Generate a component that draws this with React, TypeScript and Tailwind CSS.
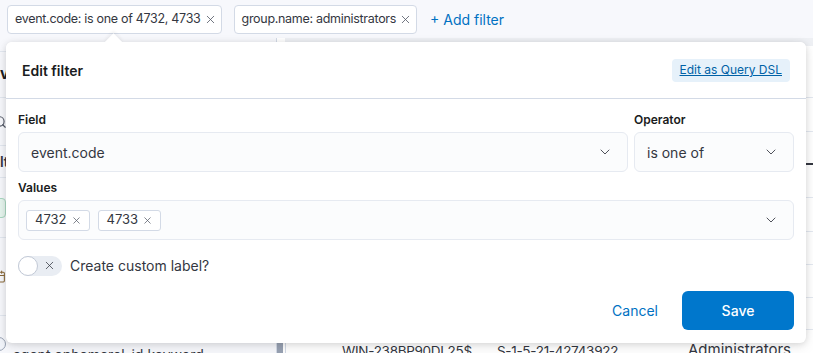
import { ChevronDown, X, Search, Calendar } from 'lucide-react';

function Pill({ label }: { label: string }) {
  return (
    <div className="flex h-[29px] items-center gap-[3px] rounded-[4px] border border-[#d3dae6] bg-white pl-[7px] pr-[4px] text-[12.5px] tracking-[-0.3px] text-[#343741]">
      <span>{label}</span>
      <X className="h-[13px] w-[13px] text-[#535966]" strokeWidth={1.5} />
    </div>
  );
}

function Chip({ label }: { label: string }) {
  return (
    <div className="flex h-[21px] items-center gap-[4px] rounded-[3px] border border-[#d3dae6] bg-white pl-[8px] pr-[7px] text-[13px] text-[#343741]">
      <span>{label}</span>
      <X className="h-[11px] w-[11px] text-[#535966]" strokeWidth={1.6} />
    </div>
  );
}

function Select({ value, className }: { value: string; className: string }) {
  return (
    <div
      className={`flex h-[40px] items-center justify-between rounded-[6px] border border-[#e6eaf1] bg-[#fbfcfd] pl-[12px] pr-[14px] text-[14px] text-[#343741] ${className}`}
    >
      <span>{value}</span>
      <ChevronDown className="h-[16px] w-[16px] text-[#343741]" strokeWidth={1.3} />
    </div>
  );
}

export default function App() {
  return (
    <div className="relative h-[353px] w-[813px] overflow-hidden bg-white font-['Inter',sans-serif] text-[#343741]">
      {/* filter bar */}
      <div className="flex h-[38px] items-center gap-[12px] bg-[#f7f8fc] pl-[7px]">
        <Pill label="event.code: is one of 4732, 4733" />
        <Pill label="group.name: administrators" />
        <span className="ml-[1px] text-[14px] text-[#0071c2]">+ Add filter</span>
      </div>

      {/* page behind */}
      <div className="flex h-[315px]">
        <div className="flex w-[277px] flex-col border-r border-[#d3dae6] bg-[#f7f8fc]">
          <div className="h-[14px] border-b border-[#e3e8f0]" />
          <div className="flex h-[46px] items-center border-b border-[#e3e8f0]">
            <span className="w-[7px] overflow-hidden whitespace-nowrap text-[15px] font-bold text-[#1a1c21]">vi</span>
          </div>
          <div className="flex h-[48px] items-center border-b border-[#e3e8f0]">
            <Search className="ml-[-7px] h-[14px] w-[14px] text-[#535966]" />
          </div>
          <div className="flex h-[32px] items-center border-b border-[#e3e8f0]">
            <span className="w-[6px] overflow-hidden whitespace-nowrap text-[14px] font-semibold">lt</span>
          </div>
          <div className="flex h-[60px] items-center border-b border-[#e3e8f0]">
            <span className="ml-[-8px] h-[20px] w-[14px] rounded-[4px] border border-[#a8d8c0] bg-[#e6f5ee]" />
          </div>
          <div className="flex h-[78px] items-center border-b border-[#e3e8f0]">
            <Calendar className="ml-[-7px] h-[13px] w-[13px] text-[#8a6a3a]" />
          </div>
          <div className="flex flex-1 items-end gap-[7px] text-[14px] text-[#343741]">
            <span className="ml-[-8px] mb-[2px] h-[14px] w-[14px] shrink-0 rounded-full border border-[#98a2b3] bg-[#f1f4fa]" />
            <span className="-mb-[10px] leading-[16px]">agent.ephemeral_id.keyword</span>
          </div>
        </div>
        <div className="flex w-[8px] flex-col">
          <div className="flex-1" />
          <div className="h-[26px] w-[6px] bg-[#98a2b3]" />
        </div>
        <div className="flex flex-1 flex-col bg-white">
          <div className="h-[8px] bg-[#eef0f4]" />
          <div className="h-[52px] border-b border-[#e3e8f0]" />
          <div className="h-[34px] border-b border-[#e3e8f0]" />
          <div className="h-[33px] border-b-2 border-[#343741]" />
          <div className="h-[33px] border-b border-[#e3e8f0]" />
          <div className="h-[34px] border-b border-[#e3e8f0]" />
          <div className="h-[33px] border-b border-[#e3e8f0]" />
          <div className="h-[33px] border-b border-[#e3e8f0]" />
          <div className="h-[32px] border-b border-[#e3e8f0]" />
          <div className="flex flex-1 items-end border-l border-[#d3dae6] pl-[56px] text-[15px] text-[#343741]">
            <span className="-mb-[8px] w-[155px] shrink-0 text-[13.5px] tracking-[-0.3px]">WIN-238BP90DL25$</span>
            <span className="-mb-[8px] w-[191px] shrink-0 text-[13.5px] tracking-[-0.3px]">S-1-5-21-42743922</span>
            <span className="-mb-[8px] shrink-0">Administrators</span>
          </div>
        </div>
      </div>

      {/* popover */}
      <div className="absolute left-[6px] top-[42px] w-[800px] rounded-[6px] bg-white shadow-[0_1px_6px_rgba(0,0,0,0.12),0_4px_14px_rgba(0,0,0,0.08)]">
        <div className="absolute left-[101px] top-[-6px] h-[13px] w-[13px] rotate-45 bg-white shadow-[-2px_-2px_3px_rgba(0,0,0,0.05)]" />
        <div className="relative flex h-[57px] items-center justify-between rounded-t-[6px] border-b border-[#d3dae6] bg-white pl-[16px] pr-[16px]">
          <span className="text-[14px] font-semibold text-[#1a1c21]">Edit filter</span>
          <span className="flex h-[23px] items-center rounded-[4px] bg-[#e6f1fa] px-[8px] text-[12px] text-[#0061a6] underline">
            Edit as Query DSL
          </span>
        </div>
        <div className="px-[12px] pb-[13px] pt-[13px]">
          <div className="flex gap-[6px]">
            <div className="flex flex-col">
              <span className="mb-[5px] text-[12px] font-semibold leading-[15px] text-[#1a1c21]">Field</span>
              <Select value="event.code" className="w-[610px]" />
            </div>
            <div className="flex flex-col">
              <span className="mb-[5px] text-[12px] font-semibold leading-[15px] text-[#1a1c21]">Operator</span>
              <Select value="is one of" className="w-[160px]" />
            </div>
          </div>
          <span className="mb-[5px] mt-[8px] block text-[12px] font-semibold leading-[15px] text-[#1a1c21]">Values</span>
          <div className="flex h-[40px] items-center justify-between rounded-[6px] border border-[#e6eaf1] bg-[#fbfcfd] pl-[7px] pr-[14px]">
            <div className="flex gap-[8px]">
              <Chip label="4732" />
              <Chip label="4733" />
            </div>
            <ChevronDown className="h-[16px] w-[16px] text-[#343741]" strokeWidth={1.3} />
          </div>
          <div className="mt-[15px] flex items-center gap-[8px]">
            <div className="flex h-[20px] w-[44px] items-center rounded-full bg-[#e9edf3]">
              <span className="h-[20px] w-[20px] rounded-full border border-[#c2c9d6] bg-white" />
              <X className="ml-[5px] h-[13px] w-[13px] text-[#343741]" strokeWidth={1.4} />
            </div>
            <span className="text-[14px] text-[#343741]">Create custom label?</span>
          </div>
          <div className="mt-[15px] flex items-center justify-end gap-[24px]">
            <span className="text-[14px] text-[#0071c2]">Cancel</span>
            <div className="flex h-[39px] w-[112px] items-center justify-center rounded-[6px] bg-[#0077cc] text-[14px] font-medium text-white">
              Save
            </div>
          </div>
        </div>
      </div>
    </div>
  );
}
